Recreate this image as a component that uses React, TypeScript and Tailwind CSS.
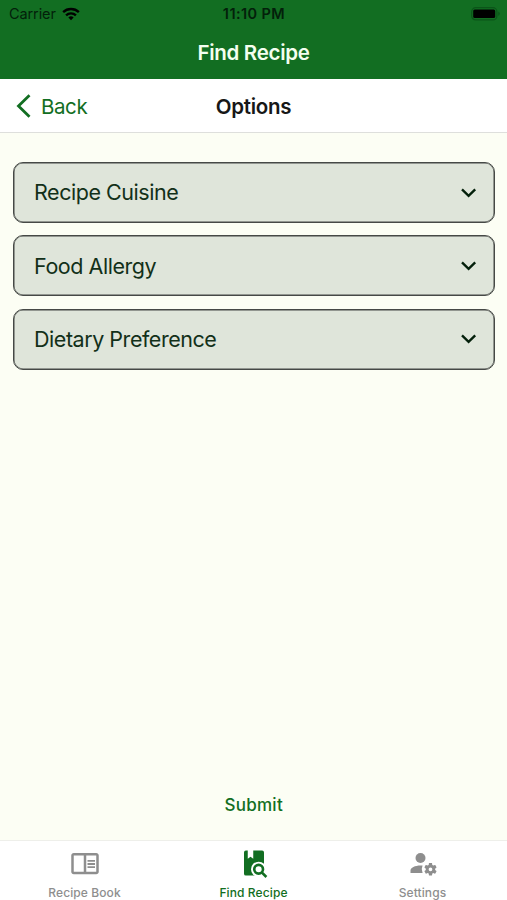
import type { ReactNode } from "react";

function Chevron() {
  return (
    <svg className="h-[18px] w-[18px]" viewBox="0 0 18 18" fill="none" stroke="#04200b" strokeWidth="2.4">
      <path d="M2 5.4 8.6 11.8l6.6-6.4" />
    </svg>
  );
}

function SelectRow({ label }: { label: string }) {
  return (
    <button className="flex h-[61px] w-full items-center justify-between rounded-[10px] border border-[#464946] bg-[#dfe5da] pr-[16px] pl-[20px] text-[#123019] shadow-[inset_0_0_0_0.5px_#464946]">
      <span className="text-[21.5px] tracking-[-0.46px]">{label}</span>
      <Chevron />
    </button>
  );
}

function Tab({ label, active, children }: { label: string; active?: boolean; children: ReactNode }) {
  return (
    <div className={`flex flex-1 flex-col items-center pt-[7px] ${active ? "text-[#126e22]" : "text-[#8e8e8e]"}`}>
      <svg className="h-[30px] w-[30px] shrink-0" viewBox="0 0 24 24" fill="currentColor">
        {children}
      </svg>
      <span className="mt-[7px] shrink-0 text-[12px] leading-[15px] font-medium tracking-[0.1px]">{label}</span>
    </div>
  );
}

export default function App() {
  return (
    <div className="flex h-[900px] w-[507px] flex-col overflow-hidden bg-[#fcfef4] font-['Inter',sans-serif]">
      <header className="h-[79px] bg-[#126e22]">
        <div className="grid h-[27px] grid-cols-[1fr_auto_1fr] items-center pr-[6px] pl-[7px] text-[#03200a]">
          <div className="flex items-center gap-[6px] pl-[2px] text-[14.5px]">
            <span className="tracking-[-0.1px]">Carrier</span>
            <svg className="h-[14px] w-[18px]" viewBox="0 0 19 14" fill="none" stroke="#000" strokeWidth="2.5">
              <path d="M1.2 5.1a12 12 0 0 1 16.6 0M4.3 8.4a7.5 7.5 0 0 1 10.4 0" />
              <path d="M9.5 13.6 6.7 10.8a4 4 0 0 1 5.6 0z" fill="#000" stroke="none" />
            </svg>
          </div>
          <span className="text-center text-[14.5px] font-semibold tracking-[0.42px]">11:10 PM</span>
          <svg className="h-[14px] w-[31px] justify-self-end" viewBox="0 0 31 14">
            <rect x="1.7" y="0.7" width="25.2" height="12.2" rx="4" fill="none" stroke="#0b5519" strokeWidth="1.2" />
            <rect x="3.2" y="2.5" width="22" height="8.6" rx="1.5" fill="#000" />
            <path d="M28.3 4.6q3 2.2 0 4.4z" fill="#0b5519" />
          </svg>
        </div>
        <h1 className="pt-[11px] text-center text-[20.5px] leading-[30px] font-semibold tracking-[-0.3px] text-[#f4fff0]">Find Recipe</h1>
      </header>

      <nav className="grid h-[54px] grid-cols-3 items-center border-b border-[#dedfdc] bg-white">
        <button className="flex items-center gap-[10px] pl-[16px] text-[#126e22]">
          <svg className="h-[24px] w-[15px]" viewBox="0 0 15 24" fill="none" stroke="currentColor" strokeWidth="2.8">
            <path d="M13.5 1.3 2.5 12l11 10.7" />
          </svg>
          <span className="pt-[3px] text-[20.5px] tracking-[-0.4px]">Back</span>
        </button>
        <h2 className="pt-[3px] text-center text-[20.5px] font-semibold tracking-[-0.25px] text-[#171717]">Options</h2>
      </nav>

      <main className="flex flex-1 flex-col pt-[29px] pr-[12.5px] pl-[13px]">
        <div className="flex flex-col gap-[12.4px]">
          <SelectRow label="Recipe Cuisine" />
          <SelectRow label="Food Allergy" />
          <SelectRow label="Dietary Preference" />
        </div>
        <button className="mt-auto mb-[23px] self-center text-[17px] leading-[24px] font-medium tracking-[0.25px] text-[#126e22]">Submit</button>
      </main>

      <footer className="flex h-[60px] border-t border-[#eeefea] bg-white">
        <Tab label="Recipe Book">
          <path d="M21 4H3c-1.1 0-2 .9-2 2v13c0 1.1.9 2 2 2h18c1.1 0 2-.9 2-2V6c0-1.1-.9-2-2-2zM11 19H3V6h8v13zm10 0h-8V6h8v13zm-7-9.5h6V11h-6zm0 2.5h6v1.5h-6zm0 2.5h6V16h-6z" />
        </Tab>
        <Tab label="Find Recipe" active>
          <path d="M7 2v6.500l2.200-1.500 2.200 1.500V2h7.100A1.500 1.500 0 0 1 20 3.500v17a1.500 1.500 0 0 1-1.500 1.500h-13A1.500 1.500 0 0 1 4 20.500v-17A1.500 1.500 0 0 1 5.500 2z" />
          <circle cx="15.7" cy="17" r="6.1" fill="#fff" />
          <path d="M16 19h5v4h-5z" fill="#fff" />
          <g fill="none" stroke="currentColor" strokeWidth="2.1">
            <circle cx="15.7" cy="17" r="3.5" />
            <path d="m18.2 19.5 3.7 3.7" />
          </g>
        </Tab>
        <Tab label="Settings">
          <circle cx="10" cy="8" r="4" />
          <path d="M10 14c-4.42 0-8 1.79-8 4v2h9.68a7 7 0 0 1-.04-5.91A15 15 0 0 0 10 14" />
          <path
            fillRule="evenodd"
            d="M17 12c-.13 0-.24.09-.26.21l-.19 1.32c-.3.13-.59.29-.85.47l-1.24-.5c-.11 0-.24 0-.31.13l-1 1.73c-.06.11-.04.24.06.32l1.06.82a4 4 0 0 0 0 1l-1.06.82c-.09.08-.12.21-.06.32l1 1.73c.06.13.19.13.31.13l1.24-.5c.26.18.54.35.85.47l.19 1.32c.02.12.12.21.26.21h2c.11 0 .22-.09.24-.21l.19-1.32c.3-.13.57-.29.84-.47l1.23.5c.13 0 .26 0 .33-.13l1-1.73c.06-.11.03-.24-.06-.32l-1.07-.82a4 4 0 0 0 0-1l1.06-.82c.09-.08.12-.21.06-.32l-1-1.73c-.06-.13-.19-.13-.32-.13l-1.23.5c-.27-.18-.54-.35-.85-.47l-.19-1.32c-.01-.12-.12-.21-.23-.21zm1 3.5a1.5 1.5 0 1 1 0 3 1.5 1.5 0 0 1 0-3"
          />
        </Tab>
      </footer>
    </div>
  );
}
